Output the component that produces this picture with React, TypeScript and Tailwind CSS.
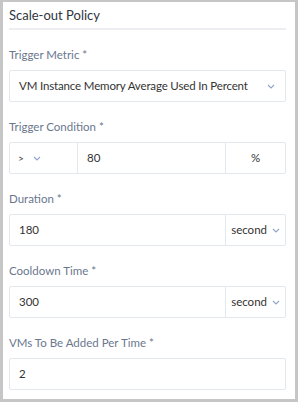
import type { ReactNode } from 'react';

const Chevron = () => (
  <svg width="8" height="5" viewBox="0 0 8 5" className="shrink-0">
    <polyline points="1,1 4,4 7,1" fill="none" stroke="#8fa6c8" strokeWidth="1.1" />
  </svg>
);

const Field = ({ label, children }: { label: string; children: ReactNode }) => (
  <div className="mt-[15px]">
    <div className="text-[11.5px] leading-[20px] text-[#6a778e] mb-[5px]">{label}</div>
    {children}
  </div>
);

const UnitSelect = ({ text }: { text: string }) => (
  <div className="w-[60px] flex items-center justify-end gap-[5px] pr-[5px] border-l border-[#e3e7ee] text-[#333]">
    <span>{text}</span>
    <Chevron />
  </div>
);

export default function App() {
  return (
    <div className="w-[298px] h-[402px] bg-[#c6c6c6] pt-[2px] pl-[3px] pr-[3px] pb-[3px] font-['Lato','Open_Sans',sans-serif] text-[11.5px]">
      <div className="h-full bg-white pl-[6px] pr-[9px]">
        <div className="pt-[3px] text-[13px] leading-[20px] text-[#2f3540]">Scale-out Policy</div>
        <div className="mt-[3px] h-[2px] bg-[#eceef2]" />

        <Field label="Trigger Metric *">
          <div className="h-[32px] border border-[#e3e7ee] rounded-[2px] flex items-center justify-between pl-[9px] pr-[10px] text-[#333]">
            <span className="whitespace-nowrap tracking-[-0.15px]">VM Instance Memory Average Used In Percent</span>
            <Chevron />
          </div>
        </Field>

        <Field label="Trigger Condition *">
          <div className="h-[32px] border border-[#e3e7ee] rounded-[2px] flex text-[#333]">
            <div className="w-[67px] flex items-center gap-[9px] pl-[8px]">
              <span className="text-[10px]">&gt;</span>
              <Chevron />
            </div>
            <div className="flex-1 flex items-center pl-[9px] border-l border-[#e3e7ee]">80</div>
            <div className="w-[60px] flex items-center justify-center border-l border-[#e3e7ee]">%</div>
          </div>
        </Field>

        <Field label="Duration *">
          <div className="h-[32px] border border-[#e3e7ee] rounded-[2px] flex text-[#333]">
            <div className="flex-1 flex items-center pl-[9px]">180</div>
            <UnitSelect text="second" />
          </div>
        </Field>

        <Field label="Cooldown Time *">
          <div className="h-[32px] border border-[#e3e7ee] rounded-[2px] flex text-[#333]">
            <div className="flex-1 flex items-center pl-[9px]">300</div>
            <UnitSelect text="second" />
          </div>
        </Field>

        <Field label="VMs To Be Added Per Time *">
          <div className="h-[32px] border border-[#e3e7ee] rounded-[2px] flex items-center pl-[9px] text-[#333]">2</div>
        </Field>
      </div>
    </div>
  );
}
